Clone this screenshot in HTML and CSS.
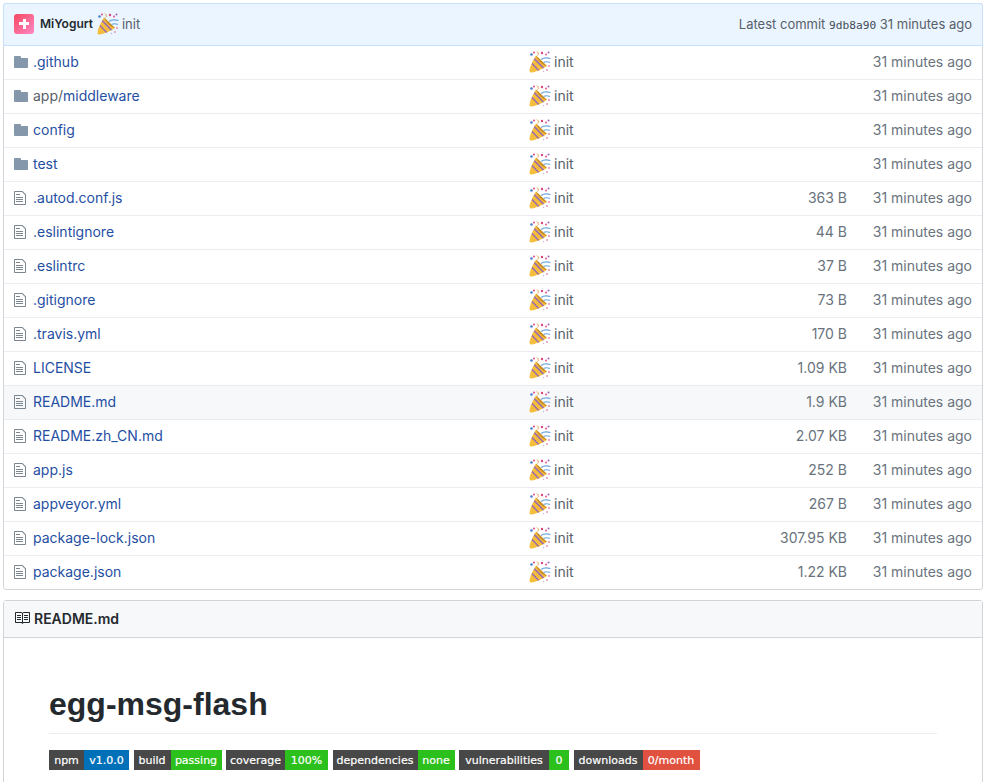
FILE: index.html
```html
<!DOCTYPE html>
<html lang="en">
<head>
    <meta charset="UTF-8">
    <meta name="viewport" content="width=device-width, initial-scale=1.0">
    <title>egg-msg-flash</title>
    <link rel="stylesheet" href="styles.css">
</head>
<body>
    <svg class="defs" width="0" height="0" aria-hidden="true">
        <symbol id="i-folder" viewBox="0 0 14 12">
            <path d="M13 2H7V1c0-.66-.31-1-1-1H1C.45 0 0 .45 0 1v10c0 .55.45 1 1 1h12c.55 0 1-.45 1-1V3c0-.55-.45-1-1-1z"/>
        </symbol>
        <symbol id="i-file" viewBox="0 0 12 16">
            <path d="M6 5H2V4h4v1zM2 8h7V7H2v1zm0 2h7V9H2v1zm0 2h7v-1H2v1zm10-7.500V14c0 .55-.45 1-1 1H1c-.55 0-1-.45-1-1V2c0-.55.45-1 1-1h7.500L12 4.500zM11 5L8 2H1v12h10V5z"/>
        </symbol>
        <symbol id="i-book" viewBox="0 0 16 16">
            <path d="M3 5h4v1H3V5zm0 3h4V7H3v1zm0 2h4V9H3v1zm11-5h-4v1h4V5zm0 2h-4v1h4V7zm0 2h-4v1h4V9zm2-6v9c0 .55-.45 1-1 1H9.500l-1 1-1-1H2c-.55 0-1-.45-1-1V3c0-.55.45-1 1-1h5.500l1 1 1-1H15c.55 0 1 .45 1 1zm-8 .500L7.500 3H2v9h6V3.500zm7-.500H9.500l-.5.500V12h6V3z"/>
        </symbol>
        <symbol id="i-tada" viewBox="0 0 22 22">
            <path d="M7 4.500 L18 15 C13.500 18 6.500 21 2.500 21.500 C1 21.500 .5 21 .5 19.500 C1 15.500 4 9 7 4.500z" fill="#f5bd3c"/>
            <path d="M5.700 7 L15.200 16.800 L13.800 17.500 L4.900 8.500z" fill="#9a6ab0"/>
            <path d="M3.300 11.800 L10.400 19.200 L9 19.800 L2.700 13.300z" fill="#9a6ab0"/>
            <path d="M7 4.500 L18 15 C16 16 8 9.500 7 4.500z" fill="#c98d24"/>
            <path d="M12 8.500 C14.500 6.500 17.500 6.500 21.500 7.500 M14.500 11.500 C16.500 10.500 18.500 10.500 21 11.500" fill="none" stroke="#6aa6de" stroke-width="1.100"/>
            <path d="M8.500 4.500 C10 3.500 9.500 2 8 .5" fill="none" stroke="#d9a441" stroke-width="1"/>
            <circle cx="2.500" cy="3.500" r="1.300" fill="#4a7fd0"/>
            <circle cx="5" cy="1.500" r="1" fill="#e0457b"/>
            <circle cx="13" cy="2" r="1.200" fill="#e0457b"/>
            <circle cx="19.500" cy="1.500" r="1" fill="#a25fb8"/>
            <circle cx="17" cy="3.500" r=".9" fill="#e0457b"/>
            <circle cx="20" cy="15" r="1" fill="#e88ab0"/>
            <circle cx="18" cy="19" r=".9" fill="#e88ab0"/>
            <circle cx="14.500" cy="20.500" r=".7" fill="#c9b0d8"/>
        </symbol>
    </svg>

    <div class="files">
        <div class="commit">
            <div class="commit-left">
                <span class="avatar"><span class="plus"></span></span>
                <a href="#" class="author">MiYogurt</a>
                <svg class="tada"><use href="#i-tada"/></svg>
                <span class="commit-msg">init</span>
            </div>
            <div class="commit-right">Latest commit <code>9db8a90</code> 31 minutes ago</div>
        </div>

        <div class="row">
            <div class="name"><svg class="ico folder"><use href="#i-folder"/></svg><a href="#">.github</a></div>
            <div class="msg"><svg class="tada"><use href="#i-tada"/></svg>init</div>
            <div class="size"></div>
            <div class="age">31 minutes ago</div>
        </div>
        <div class="row">
            <div class="name"><svg class="ico folder"><use href="#i-folder"/></svg><span class="path">app/</span><a href="#">middleware</a></div>
            <div class="msg"><svg class="tada"><use href="#i-tada"/></svg>init</div>
            <div class="size"></div>
            <div class="age">31 minutes ago</div>
        </div>
        <div class="row">
            <div class="name"><svg class="ico folder"><use href="#i-folder"/></svg><a href="#">config</a></div>
            <div class="msg"><svg class="tada"><use href="#i-tada"/></svg>init</div>
            <div class="size"></div>
            <div class="age">31 minutes ago</div>
        </div>
        <div class="row">
            <div class="name"><svg class="ico folder"><use href="#i-folder"/></svg><a href="#">test</a></div>
            <div class="msg"><svg class="tada"><use href="#i-tada"/></svg>init</div>
            <div class="size"></div>
            <div class="age">31 minutes ago</div>
        </div>
        <div class="row">
            <div class="name"><svg class="ico file"><use href="#i-file"/></svg><a href="#">.autod.conf.js</a></div>
            <div class="msg"><svg class="tada"><use href="#i-tada"/></svg>init</div>
            <div class="size">363 B</div>
            <div class="age">31 minutes ago</div>
        </div>
        <div class="row">
            <div class="name"><svg class="ico file"><use href="#i-file"/></svg><a href="#">.eslintignore</a></div>
            <div class="msg"><svg class="tada"><use href="#i-tada"/></svg>init</div>
            <div class="size">44 B</div>
            <div class="age">31 minutes ago</div>
        </div>
        <div class="row">
            <div class="name"><svg class="ico file"><use href="#i-file"/></svg><a href="#">.eslintrc</a></div>
            <div class="msg"><svg class="tada"><use href="#i-tada"/></svg>init</div>
            <div class="size">37 B</div>
            <div class="age">31 minutes ago</div>
        </div>
        <div class="row">
            <div class="name"><svg class="ico file"><use href="#i-file"/></svg><a href="#">.gitignore</a></div>
            <div class="msg"><svg class="tada"><use href="#i-tada"/></svg>init</div>
            <div class="size">73 B</div>
            <div class="age">31 minutes ago</div>
        </div>
        <div class="row">
            <div class="name"><svg class="ico file"><use href="#i-file"/></svg><a href="#">.travis.yml</a></div>
            <div class="msg"><svg class="tada"><use href="#i-tada"/></svg>init</div>
            <div class="size">170 B</div>
            <div class="age">31 minutes ago</div>
        </div>
        <div class="row">
            <div class="name"><svg class="ico file"><use href="#i-file"/></svg><a href="#">LICENSE</a></div>
            <div class="msg"><svg class="tada"><use href="#i-tada"/></svg>init</div>
            <div class="size">1.09 KB</div>
            <div class="age">31 minutes ago</div>
        </div>
        <div class="row hover">
            <div class="name"><svg class="ico file"><use href="#i-file"/></svg><a href="#">README.md</a></div>
            <div class="msg"><svg class="tada"><use href="#i-tada"/></svg>init</div>
            <div class="size">1.9 KB</div>
            <div class="age">31 minutes ago</div>
        </div>
        <div class="row">
            <div class="name"><svg class="ico file"><use href="#i-file"/></svg><a href="#">README.zh_CN.md</a></div>
            <div class="msg"><svg class="tada"><use href="#i-tada"/></svg>init</div>
            <div class="size">2.07 KB</div>
            <div class="age">31 minutes ago</div>
        </div>
        <div class="row">
            <div class="name"><svg class="ico file"><use href="#i-file"/></svg><a href="#">app.js</a></div>
            <div class="msg"><svg class="tada"><use href="#i-tada"/></svg>init</div>
            <div class="size">252 B</div>
            <div class="age">31 minutes ago</div>
        </div>
        <div class="row">
            <div class="name"><svg class="ico file"><use href="#i-file"/></svg><a href="#">appveyor.yml</a></div>
            <div class="msg"><svg class="tada"><use href="#i-tada"/></svg>init</div>
            <div class="size">267 B</div>
            <div class="age">31 minutes ago</div>
        </div>
        <div class="row">
            <div class="name"><svg class="ico file"><use href="#i-file"/></svg><a href="#">package-lock.json</a></div>
            <div class="msg"><svg class="tada"><use href="#i-tada"/></svg>init</div>
            <div class="size">307.95 KB</div>
            <div class="age">31 minutes ago</div>
        </div>
        <div class="row">
            <div class="name"><svg class="ico file"><use href="#i-file"/></svg><a href="#">package.json</a></div>
            <div class="msg"><svg class="tada"><use href="#i-tada"/></svg>init</div>
            <div class="size">1.22 KB</div>
            <div class="age">31 minutes ago</div>
        </div>
    </div>

    <div class="readme">
        <div class="readme-head">
            <svg class="book"><use href="#i-book"/></svg>README.md
        </div>
        <div class="readme-body">
            <h1>egg-msg-flash</h1>
            <div class="badges">
                <span class="badge"><span class="b-l w-npm">npm</span><span class="b-r blue w-ver">v1.0.0</span></span>
                <span class="badge"><span class="b-l w-build">build</span><span class="b-r green w-pass">passing</span></span>
                <span class="badge"><span class="b-l w-cov">coverage</span><span class="b-r green w-pct">100%</span></span>
                <span class="badge"><span class="b-l w-dep">dependencies</span><span class="b-r green w-none">none</span></span>
                <span class="badge"><span class="b-l w-vul">vulnerabilities</span><span class="b-r green w-zero">0</span></span>
                <span class="badge"><span class="b-l w-dl">downloads</span><span class="b-r red w-month">0/month</span></span>
            </div>
        </div>
    </div>
</body>
</html>
```

FILE: styles.css
```css
html {
    overflow: hidden;
}
body {
    font-family: Inter, "Liberation Sans", Arial, sans-serif;
    font-size: 14px;
    color: #24292e;
    background-color: #fff;
    margin: 0;
    padding: 3px 1px 0 3px;
}
a {
    color: #1f4fa3;
    text-decoration: none;
}
.defs {
    position: absolute;
}

/* file list */
.files {
    border: 1px solid #d1d5da;
    border-radius: 3px;
}
.commit {
    height: 39px;
    padding: 0 10px 2px;
    display: flex;
    justify-content: space-between;
    align-items: center;
    background-color: #eaf5ff;
    border: 1px solid #c8e1ff;
    border-radius: 3px 3px 0 0;
    font-size: 13px;
    color: #586069;
    margin: -1px -1px 0;
}
.commit-left {
    display: flex;
    align-items: center;
}
.avatar {
    width: 20px;
    height: 20px;
    border-radius: 3px;
    background: linear-gradient(135deg, #f7475f, #ff8ac6);
    margin-right: 6px;
    display: flex;
    align-items: center;
    justify-content: center;
}
.plus {
    width: 10px;
    height: 10px;
    background:
        linear-gradient(#fff, #fff) center / 10px 3px no-repeat,
        linear-gradient(#fff, #fff) center / 3px 10px no-repeat;
}
.author {
    color: #24292e;
    font-weight: 600;
    font-size: 12px;
    margin-right: 4px;
}
.commit-right code {
    font-family: "DejaVu Sans Mono", monospace;
    font-size: 11.200px;
    color: #444d56;
}
.tada {
    width: 22px;
    height: 22px;
    flex: none;
    margin-top: 1px;
    margin-right: 3px;
}
.row {
    height: 31px;
    padding: 0 10px 2px;
    display: grid;
    grid-template-columns: 515px 1fr 80px 125px;
    align-items: center;
    border-top: 1px solid #eaecef;
}
.commit + .row {
    border-top: 0;
}
.row.hover {
    background-color: #f6f8fa;
}
.name {
    display: flex;
    align-items: center;
}
.path {
    color: #586069;
}
.ico {
    flex: none;
    margin-right: 5px;
    fill: #8497ab;
}
.ico.folder {
    width: 14px;
    height: 12px;
}
.ico.file {
    width: 12px;
    height: 16px;
    margin-right: 7px;
    fill: #7c8792;
}
.msg {
    display: flex;
    align-items: center;
    color: #586069;
}
.size {
    text-align: right;
    color: #6a737d;
}
.age {
    text-align: right;
    color: #6a737d;
}

/* readme */
.readme {
    margin-top: 10px;
    border: 1px solid #d1d5da;
    border-radius: 3px;
}
.readme-head {
    height: 34px;
    padding: 0 10px 2px;
    display: flex;
    align-items: center;
    background-color: #f6f8fa;
    border-bottom: 1px solid #d1d5da;
    font-weight: 600;
    color: #24292e;
}
.book {
    width: 16px;
    height: 16px;
    margin-right: 4px;
    fill: #24292e;
}
.readme-body {
    padding: 46px 45px 60px;
}
h1 {
    margin: 0 0 16px;
    padding-bottom: 9px;
    font-family: "Liberation Sans", Arial, sans-serif;
    font-size: 32px;
    font-weight: bold;
    line-height: 40px;
    color: #24292e;
    border-bottom: 1px solid #eaecef;
}
.badges {
    display: flex;
    gap: 4.500px;
}
.badge {
    display: flex;
    height: 20px;
    font-family: "DejaVu Sans", sans-serif;
    font-size: 11px;
    -webkit-text-stroke: 0.2px #fff;
    color: #fff;
    line-height: 21px;
    text-align: center;
}
.b-l {
    background-color: #484848;
}
.blue {
    background-color: #0071b9;
}
.green {
    background-color: #2cc01c;
}
.red {
    background-color: #e05140;
}
.w-npm { width: 35px; }
.w-ver { width: 45px; }
.w-build { width: 37px; }
.w-pass { width: 51px; }
.w-cov { width: 59px; }
.w-pct { width: 43px; }
.w-dep { width: 85px; }
.w-none { width: 37px; }
.w-vul { width: 90px; }
.w-zero { width: 20px; }
.w-dl { width: 69px; }
.w-month { width: 57px; }
```
